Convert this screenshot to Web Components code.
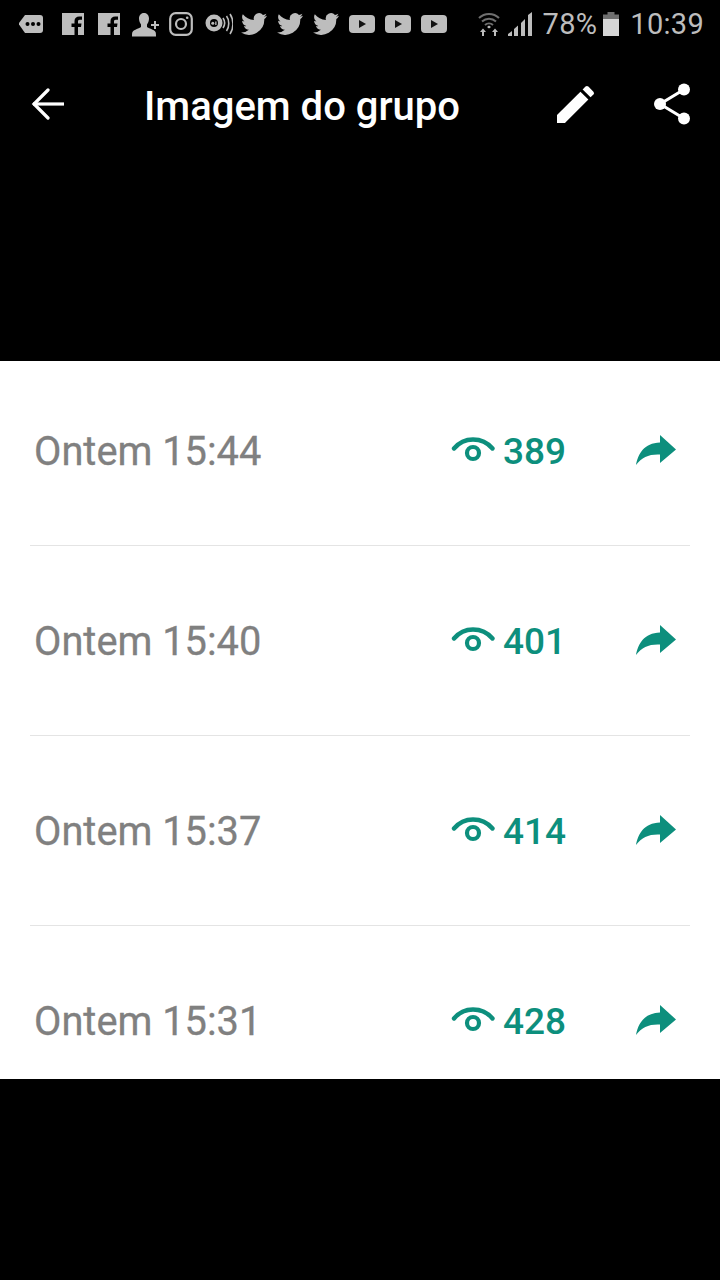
<!DOCTYPE html>
<html>
<head>
<meta charset="utf-8">
<style>
html, body { margin: 0; padding: 0; background: #000; }
body { width: 720px; height: 1280px; overflow: hidden; font-family: Roboto, "Liberation Sans", sans-serif; }
</style>
</head>
<body>
<status-bar></status-bar>
<app-bar title="Imagem do grupo"></app-bar>
<view-list>
  <view-row time="Ontem 15:44" views="389"></view-row>
  <view-row time="Ontem 15:40" views="401"></view-row>
  <view-row time="Ontem 15:37" views="414"></view-row>
  <view-row time="Ontem 15:31" views="428" last></view-row>
</view-list>
<script>
const ICONS = {
    chat: '<svg width="26" height="20" viewBox="0 0 26 20"><path fill="#bdbdbd" d="M7 1h15a3 3 0 0 1 3 3v12a3 3 0 0 1-3 3H7L1 10.500V9z"/><circle cx="9.500" cy="10" r="2" fill="#000"/><circle cx="15" cy="10" r="2" fill="#000"/><circle cx="20.500" cy="10" r="2" fill="#000"/></svg>',
    fb: '<svg width="22" height="22" viewBox="0 0 22 22"><path fill="#bdbdbd" d="M0 0h22v22h-6v-8h3l.5-3.500H16V8.500c0-1 .4-1.700 1.800-1.700H20V3.600c-.5-.1-1.600-.2-2.800-.2-2.700 0-4.700 1.600-4.700 4.600v2.500H9.500V14h3v8H0z"/></svg>',
    person: '<svg width="28" height="26" viewBox="0 0 28 26" style="margin-top:2px"><path fill="#bdbdbd" d="M12 1c3.300 0 5 2.500 5 5.500 0 2.500-1 4.600-2 6v2.500c1.500 1.200 7 2.500 8.500 5 .5 1 .5 2.500.5 4.500H0c0-2 0-3.500.5-4.500 1.500-2.500 7-3.800 8.500-5v-2.500c-1-1.400-2-3.500-2-6C7 3.500 8.700 1 12 1z"/><path fill="#bdbdbd" d="M22 9h2v3h3v2h-3v3h-2v-3h-3v-2h3z"/></svg>',
    insta: '<svg width="24" height="24" viewBox="0 0 24 24" fill="none" stroke="#bdbdbd"><rect x="1.200" y="1.200" width="21.600" height="21.600" rx="5.500" stroke-width="2.200"/><circle cx="12" cy="12" r="5" stroke-width="2.200"/><circle cx="18.200" cy="5.800" r="1.300" fill="#bdbdbd" stroke="none"/></svg>',
    oi: '<svg width="28" height="22" viewBox="0 0 28 22"><circle cx="9" cy="10" r="8.500" fill="#bdbdbd"/><circle cx="9" cy="10" r="4" fill="#000"/><circle cx="7.800" cy="10.200" r="1.500" fill="#bdbdbd"/><rect x="10.200" y="8.500" width="1.300" height="3.500" fill="#bdbdbd"/><g fill="none" stroke="#bdbdbd" stroke-width="1.600"><path d="M18 5c2 3 2 7 0 10"/><path d="M21.500 3c3 4 3 11 0 15"/><path d="M25 1c4 6 4 14 0 20"/></g></svg>',
    bird: '<svg width="26" height="22" viewBox="0 0 24 20"><path fill="#bdbdbd" d="M24 2.400c-.9.400-1.800.7-2.800.8 1-.6 1.800-1.600 2.200-2.700-1 .6-2 1-3.100 1.200A4.900 4.900 0 0 0 11.900 6.200C7.800 6 4.200 4 1.700.9.400 3.200 1 6 3.200 7.500c-.8 0-1.600-.2-2.200-.6 0 2.400 1.700 4.400 3.900 4.900-.7.200-1.500.2-2.200.1.600 2 2.400 3.400 4.600 3.400A9.900 9.900 0 0 1 0 17.800 14 14 0 0 0 21.500 5.400c1-.7 1.800-1.600 2.500-3z"/></svg>',
    yt: '<svg width="26" height="18" viewBox="0 0 26 18"><rect width="26" height="18" rx="4" fill="#bdbdbd"/><path fill="#111" d="M10 5l7 4-7 4z"/></svg>',
    wifi: '<svg width="22" height="26" viewBox="0 0 22 26"><g fill="none" stroke="#6f6f6f" stroke-width="2"><path d="M1 7c5.500-5.500 14.500-5.500 20 0"/><path d="M4 10.500c4-3.700 10-3.700 14 0"/><path d="M7 14c2.300-2 5.700-2 8 0"/></g><path fill="#bdbdbd" d="M9 17l2-1.500L13 17l-2 1.500zM4 26v-4H2l3-3.500L8 22H6v4zM16 26v-4h-2l3-3.500 3 3.500h-2v4z" transform="translate(0 -1)"/></svg>',
    signal: '<svg width="24" height="24" viewBox="0 0 24 24" fill="#bdbdbd"><path d="M0 24v-2l4-3v5zM6 24v-7l4-3.500V24zM13 24V11l4-4v17zM20 24V3l4-3v24z"/></svg>',
    battery: '<svg width="16" height="24" viewBox="0 0 16 24"><rect x="4.500" y="0" width="7" height="3" fill="#6f6f6f"/><rect x="0" y="2.500" width="16" height="5" fill="#6f6f6f"/><rect x="0" y="7" width="16" height="17" fill="#d6d6d6"/></svg>',
    back: '<svg width="34" height="32" viewBox="0 0 34 32" fill="none" stroke="#fff" stroke-width="3.200"><path d="M2 16h31"/><path d="M17 2L3 16l14 14" stroke-linecap="round"/></svg>',
    edit: '<svg width="38" height="38" viewBox="0 0 24 24" fill="#fff"><path d="M0 24v-5L14.800 4.200l5 5L5 24z"/><path d="M16.200 2.800 18 1a1.300 1.300 0 0 1 1.800 0l3.200 3.200a1.300 1.300 0 0 1 0 1.800l-1.800 1.800z"/></svg>',
    share: '<svg width="38" height="42" viewBox="0 0 38 42"><g fill="#fff"><circle cx="6" cy="21" r="6"/><circle cx="30" cy="6.500" r="6"/><circle cx="30" cy="35.500" r="6"/></g><path stroke="#fff" stroke-width="3.200" d="M6 21 30 6.500M6 21l24 14.500"/></svg>',
    eye: '<svg width="45" height="29" viewBox="0 0 45 29" fill="none" stroke="#0d8f7d"><path stroke-width="4.400" stroke-linecap="round" d="M3 11.500C8.500 5 15 2.500 22 2.500S36 5 41.500 11.500"/><circle cx="22" cy="16" r="6" stroke-width="4.200"/></svg>',
    forward: '<svg width="42" height="32" viewBox="0 0 42 32"><path fill="#0d8f7d" d="M25 1l16 14.500L25 29V20.500C14 20 7 23 1 31 3 20 9 9 25 8.500z"/></svg>'
};

class StatusBar extends HTMLElement {
    constructor() {
        super();
        this.attachShadow({ mode: 'open' });
        // gap before each icon, read off the reference
        const left = [['chat', 18], ['fb', 18], ['fb', 14], ['person', 12], ['insta', 9], ['oi', 12],
            ['bird', 8], ['bird', 10], ['bird', 10], ['yt', 10], ['yt', 10], ['yt', 10]];
        this.shadowRoot.innerHTML = `
            <style>
                :host { display: flex; height: 48px; align-items: center; justify-content: space-between; padding: 0 16px 0 0; color: #bdbdbd; }
                .left, .right { display: flex; align-items: center; }
                .left span { display: flex; }
                .txt { font: 400 29px Roboto, "Liberation Sans", sans-serif; line-height: 48px; letter-spacing: .3px; }
            </style>
            <div class="left">
                ${left.map(([n, m]) => `<span style="margin-left:${m}px">${ICONS[n]}</span>`).join('')}
            </div>
            <div class="right">
                ${ICONS.wifi}
                <span style="display:flex;margin-left:8px">${ICONS.signal}</span>
                <span class="txt" style="margin-left:11px">78%</span>
                <span style="display:flex;margin-left:6px">${ICONS.battery}</span>
                <span class="txt" style="margin-left:11px">10:39</span>
            </div>`;
    }
}

class AppBar extends HTMLElement {
    constructor() {
        super();
        this.attachShadow({ mode: 'open' });
        this.shadowRoot.innerHTML = `
            <style>
                :host { display: flex; height: 313px; align-items: flex-start; color: #fff; box-sizing: border-box; padding-top: 35px; }
                .back { margin-left: 31px; width: 34px; display: flex; margin-top: 5px; }
                h1 { margin: 1px 0 0 79px; font: 500 40px/46px Roboto, "Liberation Sans", sans-serif; width: 413px; white-space: nowrap; }
                .edit { margin-top: 2px; display: flex; }
                .share { margin-left: 59px; display: flex; }
            </style>
            <div class="back">${ICONS.back}</div>
            <h1>${this.getAttribute('title')}</h1>
            <div class="edit">${ICONS.edit}</div>
            <div class="share">${ICONS.share}</div>`;
    }
}

class ViewList extends HTMLElement {
    constructor() {
        super();
        this.attachShadow({ mode: 'open' });
        this.shadowRoot.innerHTML = `
            <style>
                :host { display: block; background: #fff; height: 718px; overflow: hidden; }
                ::slotted(view-row:first-child) { height: 185px; padding-top: 67px; }
            </style>
            <slot></slot>`;
    }
}

class ViewRow extends HTMLElement {
    constructor() {
        super();
        this.attachShadow({ mode: 'open' });
        const last = this.hasAttribute('last');
        this.shadowRoot.innerHTML = `
            <style>
                :host { display: block; height: 190px; box-sizing: border-box; margin: 0 30px; padding-top: 72px; border-bottom: 1px solid ${last ? 'transparent' : '#e4e4e4'}; }
                .row { display: flex; align-items: center; height: 48px; }
                .time { font: 400 39.800px/48px Roboto, "Liberation Sans", sans-serif; color: #808080; margin-left: 4px; width: 417px; white-space: nowrap; -webkit-text-stroke: .3px #808080; }
                .eye { display: flex; margin-top: -2px; }
                .num { font: 500 37px/48px Roboto, "Liberation Sans", sans-serif; color: #0d8f7d; margin-left: 7px; width: 132px; }
                .fwd { display: flex; margin-top: -4px; }
            </style>
            <div class="row">
                <span class="time">${this.getAttribute('time')}</span>
                <span class="eye">${ICONS.eye}</span>
                <span class="num">${this.getAttribute('views')}</span>
                <span class="fwd">${ICONS.forward}</span>
            </div>`;
    }
}

customElements.define('status-bar', StatusBar);
customElements.define('app-bar', AppBar);
customElements.define('view-list', ViewList);
customElements.define('view-row', ViewRow);
</script>
</body>
</html>
